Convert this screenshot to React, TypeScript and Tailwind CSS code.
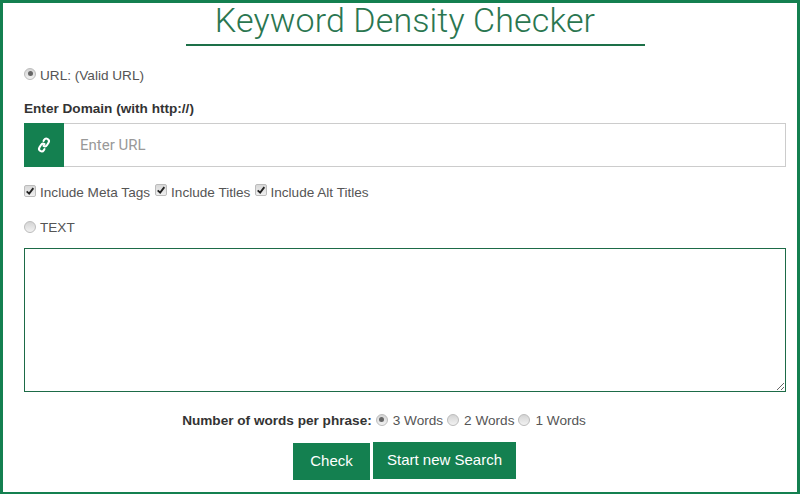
import React from "react";

function Radio({ checked = false, className = "" }: { checked?: boolean; className?: string }) {
  return (
    <span className={`relative inline-flex h-[12px] w-[12px] shrink-0 items-center justify-center rounded-full border border-[#bcbcbc] bg-gradient-to-b from-[#d4d4d4] to-[#f2f2f2] ${className}`}>
      {checked && <span className="h-[5px] w-[5px] rounded-full bg-[#666]"></span>}
    </span>
  );
}

function Check({ className = "" }: { className?: string }) {
  return (
    <span className={`inline-flex h-[12px] w-[12px] shrink-0 items-center justify-center rounded-[2px] border border-[#bcbcbc] bg-gradient-to-b from-[#d8d8d8] to-[#f0f0f0] ${className}`}>
      <svg viewBox="0 0 12 12" className="h-[10px] w-[10px]" fill="none" stroke="#222" strokeWidth="2.2">
        <path d="M2 6.5 L5 9.2 L10 2.6" />
      </svg>
    </span>
  );
}

function LinkIcon() {
  return (
    <svg viewBox="0 0 18 18" className="h-[18px] w-[18px]" fill="none" stroke="white" strokeWidth="2" strokeLinecap="round">
      <g transform="rotate(-58 9 9)">
        <path d="M10 9 a2.6 2.6 0 0 0 -2.6 -2.6 H4.6 a2.6 2.6 0 0 0 0 5.2 H5.8" />
        <path d="M8 9 a2.6 2.6 0 0 0 2.6 2.6 H13.4 a2.6 2.6 0 0 0 0 -5.2 H12.2" />
      </g>
    </svg>
  );
}

export default function App() {
  return (
    <div className="box-border flex h-[494px] w-[800px] flex-col border-x-[3px] border-t-[3px] border-b-[2px] border-[#148050] bg-white font-['Liberation_Sans',sans-serif] text-[13.6px] text-[#555]">
      <div className="ml-[183px] flex h-[43px] w-[459px] items-start justify-center border-b-2 border-[#1d7048] pr-[21px]">
        <h1 className="mt-[-4px] font-['Roboto',sans-serif] text-[34px] leading-[42px] font-light tracking-[0.12px] whitespace-nowrap text-[#2a7650]">
          Keyword Density Checker
        </h1>
      </div>

      <div className="flex flex-col px-[21px]">
        <div className="mt-[20px] flex h-[20px] items-center">
          <Radio checked className="mr-[4px] mt-[-5px]" />
          <span>URL: (Valid URL)</span>
        </div>

        <label className="mt-[13px] h-[20px] leading-[20px] font-bold text-[#333]">Enter Domain (with http://)</label>

        <div className="mt-[4px] flex h-[44px] w-[762px]">
          <div className="flex w-[40px] items-center justify-center bg-[#148050]">
            <LinkIcon />
          </div>
          <input
            placeholder="Enter URL"
            className="flex-1 border border-l-0 border-[#ccc] bg-white pl-[16px] font-['Roboto',sans-serif] text-[15px] outline-none placeholder:text-[#999]"
          />
        </div>

        <div className="mt-[16px] flex h-[20px] items-center">
          <Check className="mr-[4px] mt-[-4px]" />
          <span>Include Meta Tags</span>
          <Check className="ml-[5px] mr-[4px] mt-[-6px]" />
          <span>Include Titles</span>
          <Check className="ml-[5px] mr-[3px] mt-[-6px]" />
          <span>Include Alt Titles</span>
        </div>

        <div className="mt-[15px] flex h-[20px] items-center">
          <Radio className="mr-[4px] mt-[-3px]" />
          <span>TEXT</span>
        </div>

        <textarea className="mt-[10px] block h-[144px] w-[762px] border border-[#1d6b47] bg-white outline-none"></textarea>

        <div className="mt-[19px] flex h-[20px] items-center justify-center pr-[32px]">
          <span className="mr-[4px] font-bold text-[#333]">Number of words per phrase:</span>
          <Radio checked className="mr-[5px] mt-[-3px]" />
          <span>3 Words</span>
          <Radio className="ml-[4px] mr-[5px] mt-[-3px]" />
          <span>2 Words</span>
          <Radio className="ml-[4px] mr-[5px] mt-[-3px]" />
          <span>1 Words</span>
        </div>

        <div className="mt-[11px] flex items-start justify-center gap-[3px] pl-[9px]">
          <button className="mt-[1px] h-[37px] w-[77px] bg-[#148050] text-[15px] text-white">Check</button>
          <button className="h-[37px] w-[143px] bg-[#148050] text-[15px] text-white">Start new Search</button>
        </div>
      </div>
    </div>
  );
}
